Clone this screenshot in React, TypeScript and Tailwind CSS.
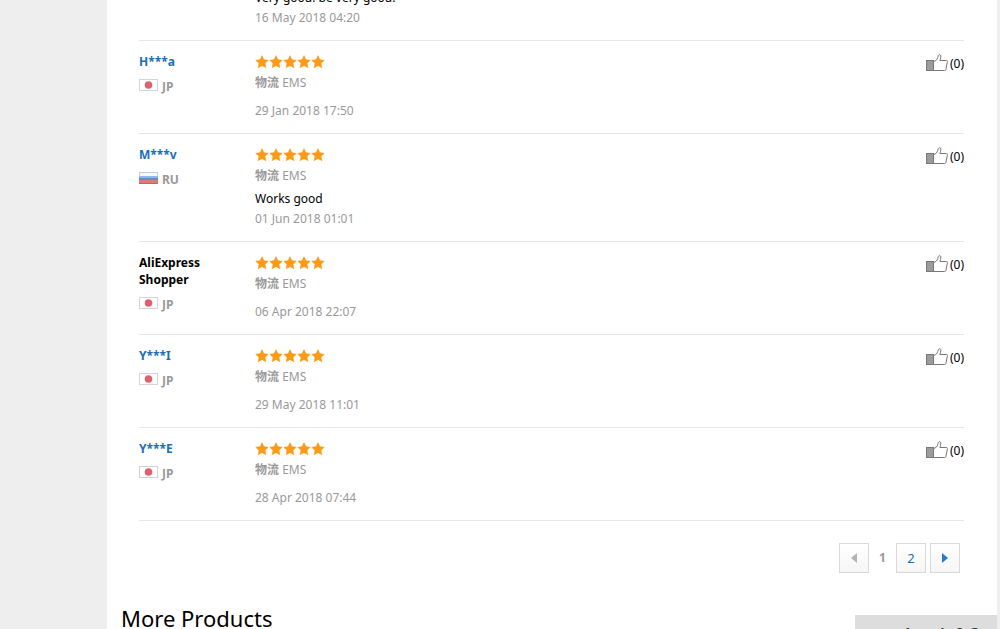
type Review = {
  user: string;
  anonymous?: boolean;
  country: 'JP' | 'RU';
  comment?: string;
  date: string;
};

const reviews: Review[] = [
  { user: 'A***o', country: 'JP', comment: 'Very good! be very good!', date: '16 May 2018 04:20' },
  { user: 'H***a', country: 'JP', date: '29 Jan 2018 17:50' },
  { user: 'M***v', country: 'RU', comment: 'Works good', date: '01 Jun 2018 01:01' },
  { user: 'AliExpress Shopper', anonymous: true, country: 'JP', date: '06 Apr 2018 22:07' },
  { user: 'Y***I', country: 'JP', date: '29 May 2018 11:01' },
  { user: 'Y***E', country: 'JP', date: '28 Apr 2018 07:44' },
];

function Flag({ country }: { country: Review['country'] }) {
  if (country === 'RU') {
    return (
      <svg width="19" height="12" viewBox="0 0 19 12" aria-hidden="true">
        <rect width="19" height="12" fill="#c9ccd2" />
        <rect x="1" y="1" width="17" height="3" fill="#f7f8fa" />
        <rect y="4" width="19" height="2" fill="#8dbbe8" />
        <rect y="6" width="19" height="2" fill="#5b8fd6" />
        <rect y="8" width="19" height="3" fill="#e07a72" />
        <rect y="11" width="19" height="1" fill="#b9686a" />
      </svg>
    );
  }
  return (
    <svg width="19" height="12" viewBox="0 0 19 12" aria-hidden="true">
      <rect x="0.5" y="0.5" width="18" height="11" fill="#fff" stroke="#d4d4d4" />
      <circle cx="9.5" cy="6" r="3.8" fill="#e0616b" />
    </svg>
  );
}

function Stars() {
  return (
    <div className="flex h-[17px] items-center" role="img" aria-label="5 out of 5 stars">
      {[1, 2, 3, 4, 5].map((n) => (
        <svg key={n} width="14" height="14" viewBox="0 0 14 14" aria-hidden="true">
          <path
            d="M7 0.6 L8.9 4.6 L13.3 5.2 L10.1 8.3 L11 12.8 L7 10.7 L3 12.8 L3.9 8.3 L0.7 5.2 L5.1 4.6 Z"
            fill="#fb9a14"
            stroke="#fb9a14"
            strokeWidth="0.4"
            strokeLinejoin="round"
          />
        </svg>
      ))}
    </div>
  );
}

function ThumbIcon() {
  return (
    <svg width="22" height="18" viewBox="0 0 22 18" fill="none" aria-hidden="true">
      <rect x="0.5" y="6.5" width="7" height="10" fill="#9c9c9c" stroke="#777" />
      <path
        d="M7.5 16.5 V7.5 C9.8 7.1 11.2 5.6 11.8 3.4 L12.3 1.5 C12.7 0.4 14.7 0.4 14.9 1.8 C15 3.4 14.2 5 13.9 6.5 H20.5 C21.3 6.5 21.6 7 21.4 7.8 L19.9 15.5 C19.7 16.2 19.3 16.5 18.6 16.5 Z"
        fill="#fff"
        stroke="#777"
      />
    </svg>
  );
}

function ReviewRow({ review }: { review: Review }) {
  return (
    <li className="flex border-b border-[#e6e6e6] pt-3 pb-3.5">
      <div className="w-[116px] shrink-0 pr-8 font-bold">
        {review.anonymous ? (
          <span className="block text-black">{review.user}</span>
        ) : (
          <a href="#" className="block text-[#1a6fb5]">{review.user}</a>
        )}
        <div className="mt-[7px] flex items-start gap-1 text-[#999]">
          <span className="pt-0.5">
            <Flag country={review.country} />
          </span>
          <span className="pt-px">{review.country}</span>
        </div>
      </div>
      <div className="flex flex-1 flex-col text-[#999]">
        <Stars />
        <div className="mt-1 h-[17px]">
          <b>物流</b> EMS
        </div>
        {review.comment && <p className="mt-[7px] -mb-[7px] h-[15px] leading-[15px] text-black">{review.comment}</p>}
        <time className="mt-[11px] block">{review.date}</time>
      </div>
      <button type="button" className="flex items-center self-start pt-px text-black" aria-label="Helpful (0)">
        <ThumbIcon />
        <span className="ml-0.5">(0)</span>
      </button>
    </li>
  );
}

const pageBox =
  'flex h-[30px] w-[30px] items-center justify-center border border-[#d9d9d9] bg-linear-to-b from-white to-[#f6f6f6]';

function Pagination() {
  return (
    <nav className="mt-[22px] mr-1 flex items-center justify-end text-[13px]" aria-label="Pages">
      <button type="button" className={pageBox} disabled aria-label="Previous">
        <svg width="6" height="10" viewBox="0 0 6 10"><path d="M6 0 V10 L0 5 Z" fill="#b3b3b3" /></svg>
      </button>
      <span className="w-[27px] text-center text-xs font-bold text-[#999]">1</span>
      <a href="#" className={`${pageBox} text-[#1a6fb5]`}>2</a>
      <button type="button" className={`${pageBox} ml-1`} aria-label="Next">
        <svg width="6" height="10" viewBox="0 0 6 10"><path d="M0 0 V10 L6 5 Z" fill="#2b7cc4" /></svg>
      </button>
    </nav>
  );
}

export default function App() {
  return (
    <div className="h-screen overflow-hidden bg-[#eee] pr-[3px] pl-[107px] font-['Noto_Sans','Noto_Sans_CJK_SC',sans-serif] text-xs leading-[17px]">
      <main className="h-full overflow-hidden bg-white">
        <section className="pr-[33px] pl-8">
          <ul className="-mt-[67px]">
            {reviews.map((review) => (
              <ReviewRow key={review.date} review={review} />
            ))}
          </ul>
          <Pagination />
        </section>
        <h2 className="mt-[30px] ml-3.5 text-[22px] leading-[30px] text-black">More Products</h2>
      </main>
      <button
        type="button"
        className="fixed right-[3px] bottom-0 flex h-3.5 w-[142px] items-start justify-center overflow-hidden bg-[#ddd] pt-[9px] text-base leading-5 font-bold text-[#333]"
      >
        <span>product info?</span>
      </button>
    </div>
  );
}
